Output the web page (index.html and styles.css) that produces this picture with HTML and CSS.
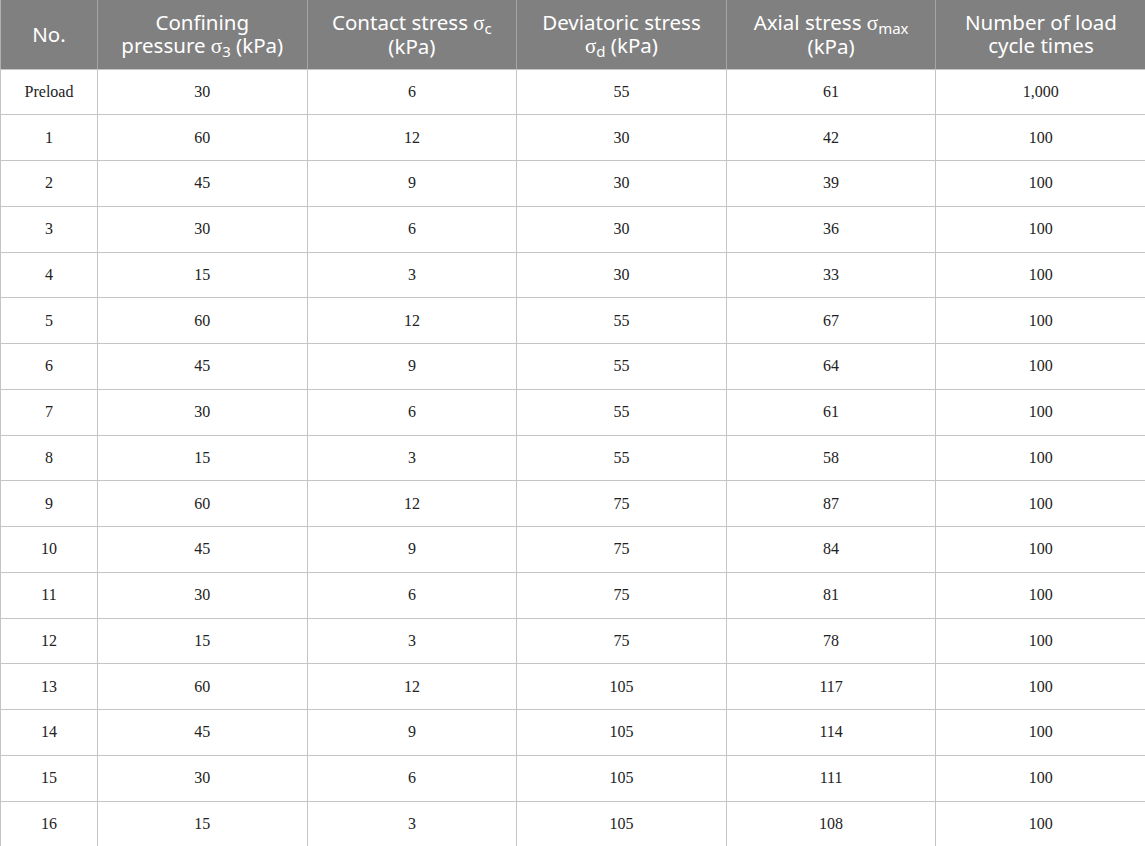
FILE: index.html
```html
<!DOCTYPE html>
<html>
<head>
<meta charset="utf-8">
<link rel="stylesheet" href="styles.css">
</head>
<body>
<table class="data">
  <colgroup>
    <col class="c-no">
    <col class="c-w"><col class="c-w"><col class="c-w"><col class="c-w"><col class="c-w">
  </colgroup>
  <thead>
    <tr>
      <th>No.</th>
      <th>Confining<br>pressure <span class="sig">σ</span><sub>3</sub> (kPa)</th>
      <th>Contact stress <span class="sig">σ</span><sub>c</sub><br>(kPa)</th>
      <th>Deviatoric stress<br><span class="sig">σ</span><sub>d</sub> (kPa)</th>
      <th>Axial stress <span class="sig">σ</span><sub>max</sub><br>(kPa)</th>
      <th>Number of load<br>cycle times</th>
    </tr>
  </thead>
  <tbody>
    <tr><td>Preload</td><td>30</td><td>6</td><td>55</td><td>61</td><td>1,000</td></tr>
    <tr><td>1</td><td>60</td><td>12</td><td>30</td><td>42</td><td>100</td></tr>
    <tr><td>2</td><td>45</td><td>9</td><td>30</td><td>39</td><td>100</td></tr>
    <tr><td>3</td><td>30</td><td>6</td><td>30</td><td>36</td><td>100</td></tr>
    <tr><td>4</td><td>15</td><td>3</td><td>30</td><td>33</td><td>100</td></tr>
    <tr><td>5</td><td>60</td><td>12</td><td>55</td><td>67</td><td>100</td></tr>
    <tr><td>6</td><td>45</td><td>9</td><td>55</td><td>64</td><td>100</td></tr>
    <tr><td>7</td><td>30</td><td>6</td><td>55</td><td>61</td><td>100</td></tr>
    <tr><td>8</td><td>15</td><td>3</td><td>55</td><td>58</td><td>100</td></tr>
    <tr><td>9</td><td>60</td><td>12</td><td>75</td><td>87</td><td>100</td></tr>
    <tr><td>10</td><td>45</td><td>9</td><td>75</td><td>84</td><td>100</td></tr>
    <tr><td>11</td><td>30</td><td>6</td><td>75</td><td>81</td><td>100</td></tr>
    <tr><td>12</td><td>15</td><td>3</td><td>75</td><td>78</td><td>100</td></tr>
    <tr><td>13</td><td>60</td><td>12</td><td>105</td><td>117</td><td>100</td></tr>
    <tr><td>14</td><td>45</td><td>9</td><td>105</td><td>114</td><td>100</td></tr>
    <tr><td>15</td><td>30</td><td>6</td><td>105</td><td>111</td><td>100</td></tr>
    <tr><td>16</td><td>15</td><td>3</td><td>105</td><td>108</td><td>100</td></tr>
  </tbody>
</table>
</body>
</html>
```
FILE: styles.css
```css
html, body {
  margin: 0;
  padding: 0;
  background: #ffffff;
}
.data {
  width: 1145px;
  border-collapse: collapse;
  table-layout: fixed;
}
.c-no { width: 97px; }
.c-w { width: 209.6px; }
.data th {
  background: #808080;
  color: #ffffff;
  font-family: "Noto Sans", "Open Sans", sans-serif;
  font-weight: 400;
  font-size: 20.5px;
  line-height: 23px;
  height: 69px;
  padding: 0 4px;
  text-align: center;
  vertical-align: middle;
  border-left: 1px solid #a6a6a6;
  border-bottom: 1px solid #c4c4c4;
  box-sizing: border-box;
}
.data th:first-child { border-left: 1px solid #b0b0b0; }
.data th .sig {
  font-family: "Liberation Serif", "DejaVu Serif", serif;
  font-size: 21px;
}
.data th sub {
  font-size: 15px;
  line-height: 0;
  vertical-align: -4px;
}
.data td {
  font-family: "Liberation Serif", "Times New Roman", serif;
  font-size: 16px;
  color: #222222;
  text-align: center;
  vertical-align: middle;
  height: 45.75px;
  padding: 0;
  border: 1px solid #c4c4c4;
  box-sizing: border-box;
}
```
